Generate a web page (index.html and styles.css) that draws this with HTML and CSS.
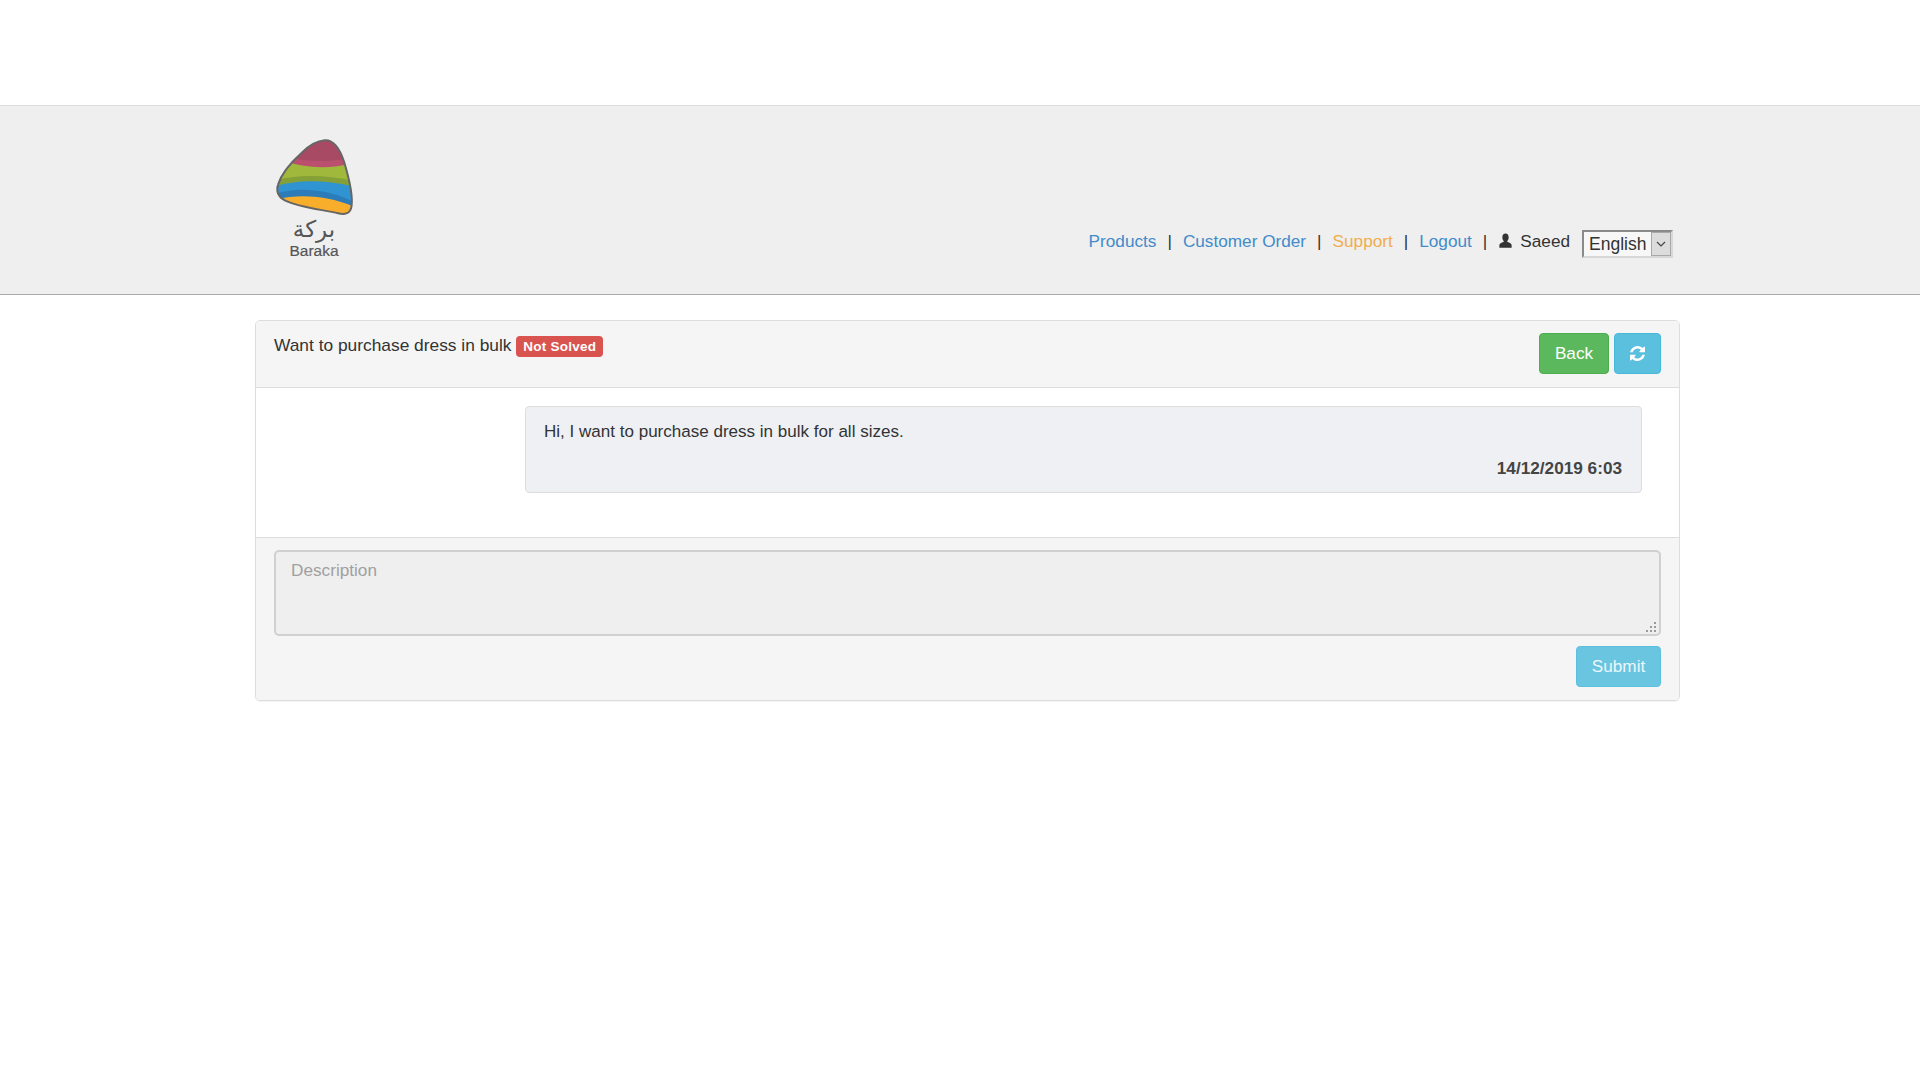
FILE: index.html
```html
<!DOCTYPE html>
<html lang="en">
<head>
<meta charset="utf-8">
<title>Support ticket</title>
<link rel="stylesheet" href="styles.css">
</head>
<body>
<header class="site-header">
  <div class="container header-row">
    <a class="brand" href="#">
      <svg class="brand-mark" viewBox="70 50 245 240" aria-hidden="true">
        <defs>
          <clipPath id="drop"><path d="M225 60C255 58 272 92 283 125C295 165 310 225 305 258C302 280 285 284 265 279C220 268 150 262 105 240C85 230 78 212 85 192C95 160 125 125 155 98C175 78 200 62 225 60Z"/></clipPath>
        </defs>
        <g clip-path="url(#drop)">
          <rect x="70" y="50" width="245" height="240" fill="#a94a64"/>
          <path d="M70 100C130 118 200 132 310 112V300H70Z" fill="#bb4f6e"/>
          <path d="M70 112C130 135 220 155 310 128V300H70Z" fill="#a0b93c"/>
          <path d="M70 182C130 164 220 160 310 182V300H70Z" fill="#84a036"/>
          <path d="M70 200C130 178 220 176 310 198V300H70Z" fill="#3094d2"/>
          <path d="M70 222C130 202 220 200 310 244V300H70Z" fill="#2b7cb8"/>
          <path d="M70 240C130 222 220 220 310 258V300H70Z" fill="#f9ae2b"/>
        </g>
        <path d="M225 60C255 58 272 92 283 125C295 165 310 225 305 258C302 280 285 284 265 279C220 268 150 262 105 240C85 230 78 212 85 192C95 160 125 125 155 98C175 78 200 62 225 60Z" fill="none" stroke="#666" stroke-width="6"/>
      </svg>
      <span class="brand-ar" lang="ar" dir="rtl">بركة</span>
      <span class="brand-en">Baraka</span>
    </a>
    <nav class="main-nav">
      <a class="nav-link" href="#">Products</a><span class="sep">|</span>
      <a class="nav-link" href="#">Customer Order</a><span class="sep">|</span>
      <a class="nav-link nav-active" href="#">Support</a><span class="sep">|</span>
      <a class="nav-link" href="#">Logout</a><span class="sep">|</span>
      <span class="user">
        <svg class="user-icon" viewBox="0 0 14 16" aria-hidden="true"><path d="M7 0C9.2 0 10.4 1.7 10.4 3.9C10.4 5.6 9.8 7 9 7.9C8.7 8.3 8.8 8.9 9.3 9.1C11.3 9.9 13.6 10.5 13.6 12.6V15.4H.4V12.6C.4 10.5 2.7 9.9 4.7 9.1C5.2 8.9 5.3 8.3 5 7.9C4.2 7 3.6 5.6 3.6 3.9C3.6 1.7 4.8 0 7 0Z"/></svg>
        <span>Saeed</span>
      </span>
      <label class="lang">
        <select class="lang-select" aria-label="Language"><option>English</option></select>
        <span class="lang-arrow"><svg viewBox="0 0 10 6" aria-hidden="true"><path d="M1 1L5 5L9 1" fill="none" stroke="#444" stroke-width="1.2"/></svg></span>
      </label>
    </nav>
  </div>
</header>
<main class="container">
  <section class="panel">
    <div class="panel-heading">
      <div class="ticket-title">Want to purchase dress in bulk <span class="label-danger">Not Solved</span></div>
      <div class="actions">
        <button class="btn btn-success" type="button">Back</button>
        <button class="btn btn-info" type="button" aria-label="Refresh">
          <svg class="refresh-icon" viewBox="0 0 1536 1536" aria-hidden="true"><path d="M1511 928q0 5-1 7-64 268-268 434.5t-478 166.5q-146 0-282.5-55t-243.5-157l-129 129q-19 19-45 19t-45-19-19-45v-448q0-26 19-45t45-19h448q26 0 45 19t19 45-19 45l-137 137q71 66 161 102t187 36q134 0 250-65t186-179q11-17 53-117 8-23 30-23h192q13 0 22.5 9.5t9.5 22.5zm25-800v448q0 26-19 45t-45 19h-448q-26 0-45-19t-19-45 19-45l138-138q-148-137-349-137-134 0-250 65t-186 179q-11 17-53 117-8 23-30 23h-199q-13 0-22.5-9.5t-9.5-22.5v-7q65-268 270-434.5t480-166.5q146 0 284 55.5t245 156.5l130-129q19-19 45-19t45 19 19 45z"/></svg>
        </button>
      </div>
    </div>
    <div class="panel-body">
      <article class="message">
        <p class="message-text">Hi, I want to purchase dress in bulk for all sizes.</p>
        <p class="message-time">14/12/2019 6:03</p>
      </article>
    </div>
    <div class="panel-footer">
      <div class="reply-wrap">
        <textarea class="reply" placeholder="Description"></textarea>
        <svg class="grip" viewBox="0 0 10 10" aria-hidden="true"><path d="M8 0h2v2H8zM4 4h2v2H4zM8 4h2v2H8zM0 8h2v2H0zM4 8h2v2H4zM8 8h2v2H8z"/></svg>
      </div>
      <div class="submit-row"><button class="btn btn-submit" type="button">Submit</button></div>
    </div>
  </section>
</main>
</body>
</html>
```
FILE: styles.css
```css
* { box-sizing: border-box; }
html, body { height: 100%; }
body {
  margin: 0;
  padding-top: 105px;
  background: #fff;
  color: #333;
  font-family: "Liberation Sans", Arial, sans-serif;
  font-size: 17.2px;
  line-height: 1.43;
}
.container { width: 1425px; margin-left: 255px; }
.site-header {
  height: 190px;
  background: #efefef;
  border-top: 1px solid #dedede;
  border-bottom: 1px solid #a9a9a9;
}
.header-row {
  height: 100%;
  display: flex;
  justify-content: space-between;
  padding: 31px 7px 0 18px;
}
.brand {
  display: flex;
  flex-direction: column;
  align-items: center;
  width: 82px;
  text-decoration: none;
  color: #555;
}
.brand-mark { width: 82px; height: 80px; flex: none; }
.brand-ar { font-family: "DejaVu Sans", sans-serif; font-size: 23px; line-height: 22px; margin-top: 1px; }
.brand-en { font-size: 15.5px; line-height: 17px; margin-top: 2px; -webkit-text-stroke: .2px #555; }
.main-nav {
  display: flex;
  align-items: center;
  height: 30px;
  margin-top: 89px;
  white-space: nowrap;
}
.nav-link { color: #428bca; text-decoration: none; }
.nav-active { color: #f0ad4e; }
.sep { margin: 0 11px; color: #333; }
.user { display: flex; align-items: center; gap: 8px; margin-left: 1px; }
.user-icon { width: 13px; height: 16px; fill: #333; }
.lang { position: relative; display: block; margin: 6px 0 0 12px; width: 91px; height: 28px; }
.lang-select {
  appearance: none;
  display: block;
  width: 100%;
  height: 100%;
  padding: 0 0 0 5px;
  border: 2px solid;
  border-color: #8a8a8a #d8d8d8 #d8d8d8 #8a8a8a;
  border-radius: 0;
  background: #f7f7f7;
  color: #333;
  font: 17.5px "Liberation Sans", Arial, sans-serif;
}
.lang-arrow {
  position: absolute;
  top: 2px;
  right: 2px;
  width: 20px;
  height: 24px;
  display: flex;
  align-items: center;
  justify-content: center;
  background: #dcdcdc;
  border: 1px solid #a8a8a8;
  pointer-events: none;
}
.lang-arrow svg { width: 10px; height: 6px; }
.panel {
  margin-top: 25px;
  height: 381px;
  border: 1px solid #ddd;
  border-radius: 5px;
  display: flex;
  flex-direction: column;
  box-shadow: 0 1px 1px rgba(0,0,0,.05);
  overflow: hidden;
}
.panel-heading {
  height: 67px;
  flex: none;
  display: flex;
  justify-content: space-between;
  padding: 12px 18px 0;
  background: #f5f5f5;
  border-bottom: 1px solid #ddd;
}
.ticket-title { line-height: 24px; font-size: 17.35px; }
.label-danger {
  display: inline-block;
  vertical-align: 0;
  padding: 0 7px;
  height: 21px;
  line-height: 21px;
  border-radius: 4px;
  background: #d9534f;
  color: #fff;
  font-size: 13.5px;
  font-weight: 700;
  letter-spacing: .25px;
}
.actions { display: flex; gap: 5px; height: 41px; }
.btn {
  height: 41px;
  border: 1px solid transparent;
  border-radius: 4px;
  color: #fff;
  font: 17.2px "Liberation Sans", Arial, sans-serif;
  display: flex;
  align-items: center;
  justify-content: center;
}
.btn-success { width: 70px; background: #5cb85c; border-color: #4cae4c; }
.btn-info { width: 47px; background: #5bc0de; border-color: #46b8da; }
.refresh-icon { width: 15px; height: 15px; fill: #fff; }
.panel-body { height: 149px; flex: none; padding: 18px 37px 0 269px; background: #fff; }
.message {
  height: 87px;
  padding: 12px 18px;
  background: #eef0f4;
  border: 1px solid #ddd;
  border-radius: 4px;
}
.message-text { margin: 0; line-height: 25px; font-size: 17.05px; }
.message-time { margin: 12px 1px 0 0; text-align: right; font-weight: 700; line-height: 25px; color: #444; }
.panel-footer {
  flex: 1;
  padding: 12px 18px 0;
  background: #f5f5f5;
  border-top: 1px solid #ddd;
}
.reply-wrap { position: relative; }
.reply {
  display: block;
  width: 100%;
  height: 86px;
  padding: 6px 15px;
  background: #efefef;
  border: 2px solid #d0d0d0;
  border-radius: 5px;
  color: #555;
  font: 17.2px/1.43 "Liberation Sans", Arial, sans-serif;
  outline: none;
  resize: none;
}
.reply::placeholder { color: #a0a0a0; opacity: 1; }
.grip { position: absolute; right: 5px; bottom: 4px; width: 10px; height: 10px; fill: #9a9a9a; pointer-events: none; }
.submit-row { display: flex; justify-content: flex-end; margin-top: 10px; }
.btn-submit { width: 85px; background: #6ac5e0; border-color: #5bc0de; color: #eaf7fb; }
```
